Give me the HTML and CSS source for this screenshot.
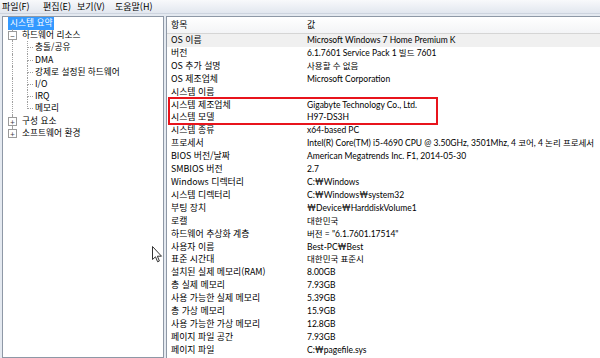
FILE: index.html
```html
<!DOCTYPE html>
<html lang="ko">
<head>
    <meta charset="utf-8"/>
    <title>시스템 정보</title>
    <link rel="stylesheet" href="styles.css">
</head>
<body>
<div class="window">
    <div class="menubar">
        <span class="menu_item m1">파일(F)</span>
        <span class="menu_item m2">편집(E)</span>
        <span class="menu_item m3">보기(V)</span>
        <span class="menu_item">도움말(H)</span>
    </div>
    <div class="main">
        <div class="tree">
            <div class="tree_row"><span class="tree_label selected">시스템 요약</span></div>
            <div class="tree_row lvl1"><span class="expander">&minus;</span><span class="tree_label">하드웨어 리소스</span></div>
            <div class="tree_row lvl2"><span class="tree_label">충돌/공유</span></div>
            <div class="tree_row lvl2"><span class="tree_label">DMA</span></div>
            <div class="tree_row lvl2"><span class="tree_label">강제로 설정된 하드웨어</span></div>
            <div class="tree_row lvl2"><span class="tree_label">I/O</span></div>
            <div class="tree_row lvl2"><span class="tree_label">IRQ</span></div>
            <div class="tree_row lvl2 last"><span class="tree_label">메모리</span></div>
            <div class="tree_row lvl1"><span class="expander">+</span><span class="tree_label">구성 요소</span></div>
            <div class="tree_row lvl1 last"><span class="expander">+</span><span class="tree_label">소프트웨어 환경</span></div>
        </div>
        <div class="splitter"></div>
        <div class="list">
            <div class="list_head">
                <span class="col_name">항목</span>
                <span class="col_value">값</span>
            </div>
            <div class="list_row first"><span class="col_name">OS 이름</span><span class="col_value">Microsoft Windows 7 Home Premium K</span></div>
            <div class="list_row"><span class="col_name">버전</span><span class="col_value">6.1.7601 Service Pack 1 빌드 7601</span></div>
            <div class="list_row"><span class="col_name">OS 추가 설명</span><span class="col_value">사용할 수 없음</span></div>
            <div class="list_row"><span class="col_name">OS 제조업체</span><span class="col_value">Microsoft Corporation</span></div>
            <div class="list_row"><span class="col_name">시스템 이름</span><span class="col_value"></span></div>
            <div class="list_row"><span class="col_name">시스템 제조업체</span><span class="col_value">Gigabyte Technology Co., Ltd.</span></div>
            <div class="list_row"><span class="col_name">시스템 모델</span><span class="col_value">H97-DS3H</span></div>
            <div class="list_row"><span class="col_name">시스템 종류</span><span class="col_value">x64-based PC</span></div>
            <div class="list_row"><span class="col_name">프로세서</span><span class="col_value">Intel(R) Core(TM) i5-4690 CPU @ 3.50GHz, 3501Mhz, 4 코어, 4 논리 프로세서</span></div>
            <div class="list_row"><span class="col_name">BIOS 버전/날짜</span><span class="col_value">American Megatrends Inc. F1, 2014-05-30</span></div>
            <div class="list_row"><span class="col_name">SMBIOS 버전</span><span class="col_value">2.7</span></div>
            <div class="list_row"><span class="col_name">Windows 디렉터리</span><span class="col_value">C:₩Windows</span></div>
            <div class="list_row"><span class="col_name">시스템 디렉터리</span><span class="col_value">C:₩Windows₩system32</span></div>
            <div class="list_row"><span class="col_name">부팅 장치</span><span class="col_value">₩Device₩HarddiskVolume1</span></div>
            <div class="list_row"><span class="col_name">로캘</span><span class="col_value">대한민국</span></div>
            <div class="list_row"><span class="col_name">하드웨어 추상화 계층</span><span class="col_value">버전 = "6.1.7601.17514"</span></div>
            <div class="list_row"><span class="col_name">사용자 이름</span><span class="col_value">Best-PC₩Best</span></div>
            <div class="list_row"><span class="col_name">표준 시간대</span><span class="col_value">대한민국 표준시</span></div>
            <div class="list_row"><span class="col_name">설치된 실제 메모리(RAM)</span><span class="col_value">8.00GB</span></div>
            <div class="list_row"><span class="col_name">총 실제 메모리</span><span class="col_value">7.93GB</span></div>
            <div class="list_row"><span class="col_name">사용 가능한 실제 메모리</span><span class="col_value">5.39GB</span></div>
            <div class="list_row"><span class="col_name">총 가상 메모리</span><span class="col_value">15.9GB</span></div>
            <div class="list_row"><span class="col_name">사용 가능한 가상 메모리</span><span class="col_value">12.8GB</span></div>
            <div class="list_row"><span class="col_name">페이지 파일 공간</span><span class="col_value">7.93GB</span></div>
            <div class="list_row"><span class="col_name">페이지 파일</span><span class="col_value">C:₩pagefile.sys</span></div>
            <div class="highlight_box"></div>
        </div>
    </div>
    <svg class="cursor" width="11" height="17" viewBox="0 0 11 17">
        <path d="M0.5 0.5 L0.5 13.5 L3.5 10.8 L5.6 15.8 L7.4 15 L5.4 10.2 L9.5 10.2 Z" fill="#fff" stroke="#333" stroke-width="1"/>
    </svg>
</div>
</body>
</html>
```

FILE: styles.css
```css
html, body {
    margin: 0;
    padding: 0;
}

body {
    font-family: "Noto Sans CJK KR", "Noto Sans", sans-serif;
    font-size: 8.9px;
    color: #000;
    background: #fff;
}

.window {
    position: relative;
    width: 600px;
    height: 358px;
    overflow: hidden;
    display: flex;
    flex-direction: column;
    background: #eef0f4;
}

.menubar {
    height: 13px;
    display: flex;
    align-items: center;
    padding-left: 2px;
    font-size: 9px;
    background: linear-gradient(#f8f9fb, #e2e7ef);
    border-bottom: 1px solid #cdd4df;
}

.menu_item {
    line-height: 13px;
}

.menu_item.m1 {
    width: 41px;
}

.menu_item.m2 {
    width: 34px;
}

.menu_item.m3 {
    width: 38px;
}

.main {
    flex: 1;
    display: flex;
    padding-top: 2px;
    background: #e4e9f0;
}

.tree {
    width: 160px;
    margin-left: 2px;
    border: 1px solid #8e98a6;
    background: #fff;
    font-size: 8.7px;
}

.tree_row {
    position: relative;
    height: 12.2px;
    line-height: 12.2px;
    padding-left: 5px;
    white-space: nowrap;
}

.tree_row.lvl1 {
    padding-left: 18px;
}

.tree_row.lvl2 {
    padding-left: 31px;
}

.tree_row.lvl1::before,
.tree_row.lvl2::before {
    content: "";
    position: absolute;
    left: 9px;
    top: 0;
    bottom: 0;
    border-left: 1px dotted #a0a0a0;
}

.tree_row.lvl1.last::before {
    bottom: 6px;
}

.tree_row.lvl2::after {
    content: "";
    position: absolute;
    left: 24px;
    top: 0;
    height: 6px;
    width: 5px;
    border-left: 1px dotted #a0a0a0;
    border-bottom: 1px dotted #a0a0a0;
}

.tree_row.lvl2 .tree_label::before {
    content: "";
    position: absolute;
    left: 24px;
    top: 6px;
    bottom: 0;
    border-left: 1px dotted #a0a0a0;
}

.tree_row.lvl2.last .tree_label::before {
    display: none;
}

.tree_label {
    padding: 0 1px;
}

.tree_label.selected {
    background: #3399ff;
    color: #fff;
    display: inline-block;
    line-height: 12.5px;
    padding: 0 2px;
}

.expander {
    position: absolute;
    left: 5px;
    top: 2px;
    width: 7px;
    height: 7px;
    border: 1px solid #9a9a9a;
    background: #fff;
    font-size: 8px;
    line-height: 7px;
    text-align: center;
    color: #444;
    z-index: 1;
}

.splitter {
    width: 2px;
}

.list {
    position: relative;
    flex: 1;
    border-left: 1px solid #8e98a6;
    border-top: 1px solid #8e98a6;
    background: #fff;
    overflow: hidden;
}

.list_head {
    display: flex;
    height: 16px;
    line-height: 16px;
    border-bottom: 1px solid #d5d5d5;
    background: linear-gradient(#ffffff, #f3f4f6);
}

.list_row {
    display: flex;
    height: 12.92px;
    line-height: 12.92px;
    white-space: nowrap;
}

.list_row.first {
    background: #f0f0f0;
}

.col_name {
    width: 136px;
    padding-left: 4px;
    flex: 0 0 auto;
    overflow: hidden;
}

.col_value {
    flex: 0 0 auto;
}

.list_row .col_value {
    font-family: Lato, "Noto Sans CJK KR", sans-serif;
    font-size: 8.5px;
}

.highlight_box {
    position: absolute;
    left: 1px;
    top: 80px;
    width: 266px;
    height: 24px;
    border: 2px solid #e8141c;
}

.cursor {
    position: absolute;
    left: 152px;
    top: 246px;
}
```
